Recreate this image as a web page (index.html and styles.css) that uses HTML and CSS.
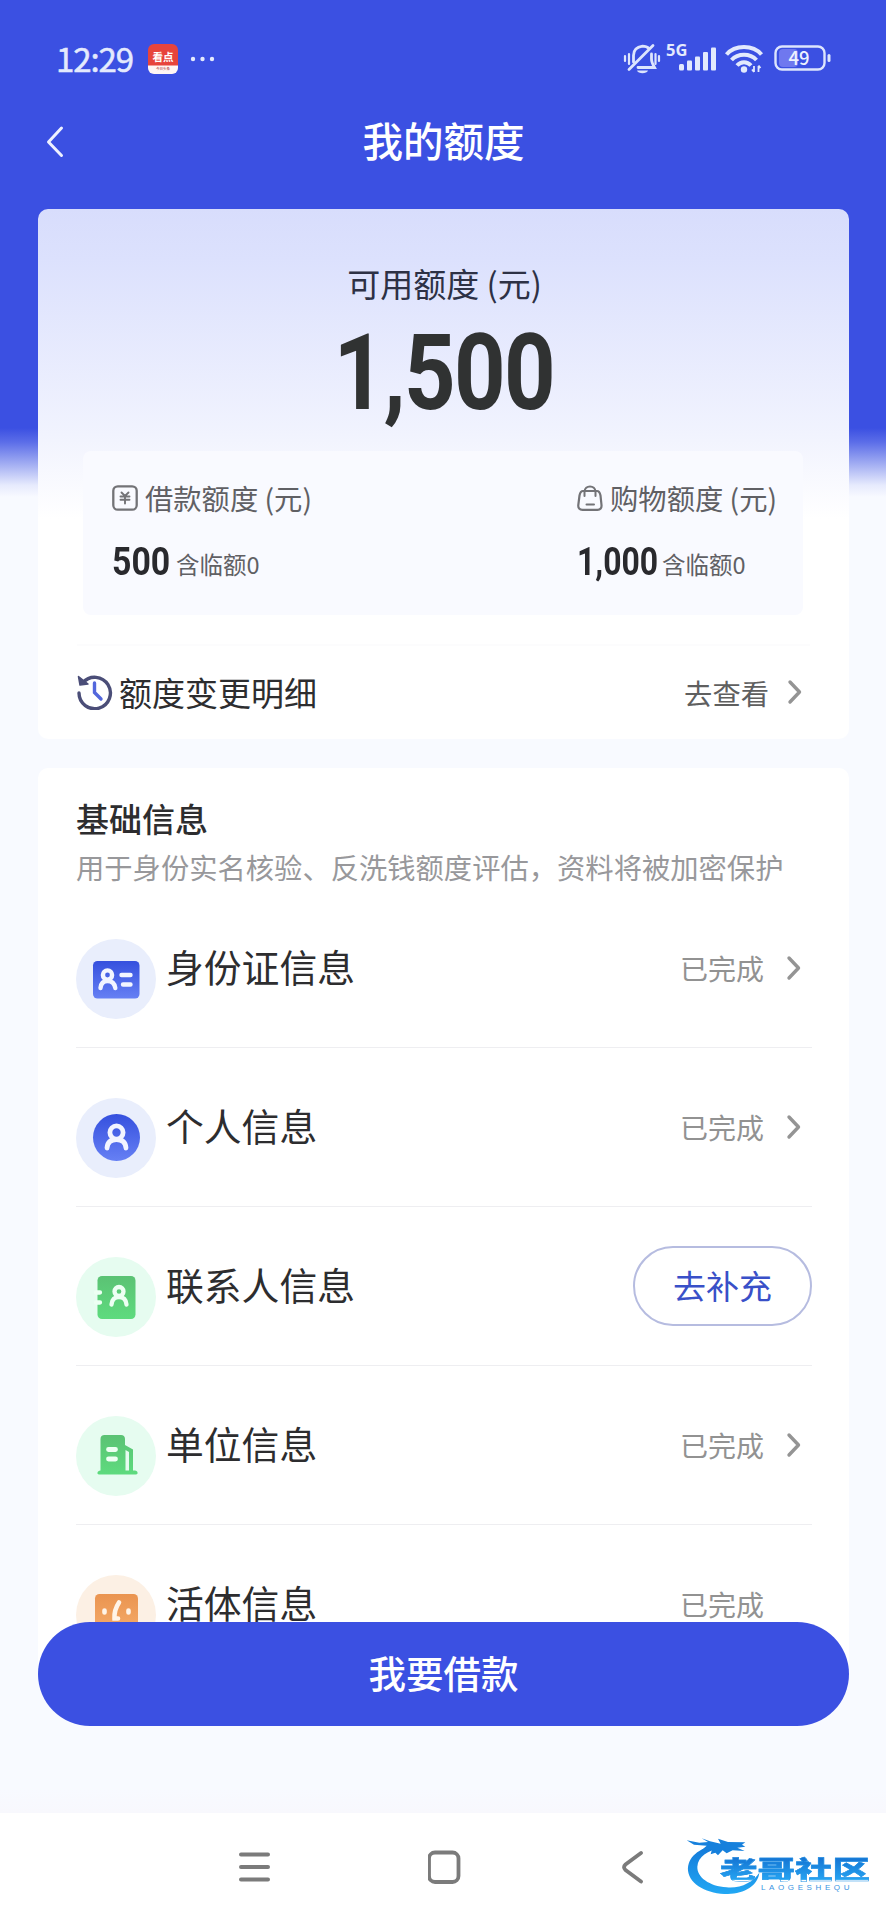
FILE: index.html
```html
<!DOCTYPE html>
<html lang="zh-CN">
<head>
<meta charset="utf-8">
<title>我的额度</title>
<link rel="stylesheet" href="styles.css">
</head>
<body>
<svg class="defs" width="0" height="0">
  <defs>
    <linearGradient id="blue" x1="0" y1="0" x2="0" y2="1"><stop offset="0" stop-color="#3550de"/><stop offset="1" stop-color="#6680f4"/></linearGradient>
    <linearGradient id="green" x1="0" y1="0" x2="0" y2="1"><stop offset="0" stop-color="#5bc274"/><stop offset="1" stop-color="#5edb7e"/></linearGradient>
    <linearGradient id="orange" x1="0" y1="0" x2="0" y2="1"><stop offset="0" stop-color="#ea9450"/><stop offset="1" stop-color="#f6ae6c"/></linearGradient>
    <linearGradient id="brand" x1="0" y1="0" x2="0" y2="1"><stop offset="0" stop-color="#1478d8"/><stop offset="1" stop-color="#22a8f4"/></linearGradient>
    <symbol id="chevron" viewBox="0 0 16 26"><path d="M3 3 L12.500 13 L3 23" fill="none" stroke="#949494" stroke-width="3.400" stroke-linecap="round" stroke-linejoin="round"/></symbol>
  </defs>
</svg>
<div class="screen">
  <header class="status">
    <span class="clock">12:29</span>
    <span class="app"><span class="app-name">看点</span><span class="app-sub">今日头条</span></span>
    <svg class="dots" width="26" height="6" viewBox="0 0 26 6"><g fill="#e4eafd"><circle cx="3" cy="3" r="2.200"/><circle cx="12.500" cy="3" r="2.200"/><circle cx="22" cy="3" r="2.200"/></g></svg>
    <svg class="tray" width="212" height="34" viewBox="0 0 212 34">
      <g fill="none" stroke="#dde5fd" stroke-width="2.800" stroke-linecap="round">
        <path d="M2 14v5M6 12v10M32.500 12v10M36 14v5" stroke-width="2.200"/>
        <path d="M10.500 20V13.500C10.500 8 14 5 19.500 4.200C22.500 4.200 24.500 5 26 6.500M28.500 12v5c0 3 1 5 3 8.500H15"/>
        <path d="M30 3.500 L6 27.500"/>
      </g>
      <path d="M14 28.500h11c-1 3.500-10 3.500-11 0z" fill="#dde5fd"/>
      <g fill="#e2e9fd"><rect x="56" y="22" width="5" height="6.500" rx="1.500"/><rect x="64" y="18.500" width="5" height="10" rx="1"/><rect x="72" y="14.500" width="5" height="14" rx="1"/><rect x="80" y="10" width="5" height="18.500" rx="1"/><rect x="88" y="5.500" width="5" height="23" rx="1"/></g>
      <g fill="none" stroke="#e2e9fd" stroke-width="4">
        <path d="M103.500 12.500C112 2.500 130 2.500 138.500 12.500"/><path d="M108.500 18C115 11 127 11 133.500 18"/><path d="M114 23.500C118 19 124 19 128 23.500"/>
      </g>
      <circle cx="121" cy="27.500" r="3.200" fill="#e2e9fd"/>
      <path d="M131 24v6M135.500 24v6M129 27.500l2 2.500M137.500 26l-2-2.500" stroke="#e2e9fd" stroke-width="1.800" fill="none"/>
      <rect x="156" y="7" width="19" height="18" rx="4" fill="#6f78ef"/>
      <rect x="152.500" y="4.500" width="49" height="23" rx="6.500" fill="none" stroke="#dde5fd" stroke-width="2.400"/>
      <rect x="204.500" y="12" width="3" height="8" rx="1.500" fill="#dde5fd"/>
      <text x="43" y="14" class="net">5G</text>
      <text x="165.500" y="22.500" class="batt">49</text>
    </svg>
  </header>

  <div class="titlebar">
    <svg class="back" width="20" height="34" viewBox="0 0 20 34"><path d="M16.500 3 L3.500 17 L16.500 30.500" fill="none" stroke="#eef1ff" stroke-width="3" stroke-linecap="round" stroke-linejoin="round"/></svg>
    <h1>我的额度</h1>
  </div>

  <main>
    <section class="card quota">
      <p class="quota-label">可用额度 (元)</p>
      <p class="quota-total"><span>1,500</span></p>
      <div class="split">
        <div class="part">
          <div class="part-head">
            <svg width="26" height="26" viewBox="0 0 26 26" fill="none" stroke="#737377" stroke-linecap="round"><rect x="1.300" y="1.300" width="23.400" height="23.400" rx="4.500" stroke-width="2.300"/><path d="M9.500 7.500L13 11L16.500 7.500M8.500 11.500H17.500M8.500 14.700H17.500M13 11V18.500" stroke-width="1.900"/></svg>
            <span>借款额度 (元)</span>
          </div>
          <div class="part-val"><span class="num n3"><span>500</span></span><span class="temp">含临额0</span></div>
        </div>
        <div class="part">
          <div class="part-head">
            <svg width="26" height="26" viewBox="0 0 26 26" fill="none" stroke="#737377" stroke-width="2.200" stroke-linecap="round"><path d="M6 6H20C22 6 23 8 23.500 10.500L24.500 20C24.800 23 23.300 24.800 20.500 24.800H5.500C2.500 24.800 1 23 1.300 20L2.500 10.500C3 8 4 6 6 6Z"/><path d="M7.500 11V7C7.500 -.5 18.500 -.5 18.500 7V11M9.500 19.500H17" stroke-width="2"/></svg>
            <span>购物额度 (元)</span>
          </div>
          <div class="part-val"><span class="num n4"><span>1,000</span></span><span class="temp">含临额0</span></div>
        </div>
      </div>
      <div class="history">
        <svg width="36" height="36" viewBox="0 0 36 36" fill="none"><path d="M6 8.500A15.700 15.700 0 1 1 2 19" stroke="#4b4e78" stroke-width="3.400" stroke-linecap="round"/><path d="M1.500 2.500L3 11L11 10Z" fill="#4b4e78" stroke="#4b4e78" stroke-width="1.500" stroke-linejoin="round"/><path d="M17.500 9V18.500L24 25" stroke="#5367dc" stroke-width="3.400" stroke-linecap="round"/></svg>
        <span class="history-name">额度变更明细</span>
        <span class="go">去查看</span>
        <svg class="chev" width="16" height="26"><use href="#chevron"/></svg>
      </div>
    </section>

    <section class="card info">
      <h2>基础信息</h2>
      <p class="desc">用于身份实名核验、反洗钱额度评估，资料将被加密保护</p>
      <ul>
        <li>
          <svg class="ico" viewBox="0 0 80 80"><circle cx="40" cy="40" r="40" fill="#e9eefc"/><rect x="17" y="22" width="46.500" height="37.500" rx="4.500" fill="url(#blue)"/><g fill="none" stroke="#f2f5ff" stroke-width="4.400" stroke-linecap="round"><circle cx="31.500" cy="36" r="4.600"/><path d="M24.500 49C25 44 28 42 31.500 42S38.500 44 39.300 49M45.500 36H54.500M47 45.500H54.500"/></g></svg>
          <span class="name">身份证信息</span><span class="done">已完成</span><svg class="chev" width="16" height="26"><use href="#chevron"/></svg>
        </li>
        <li>
          <svg class="ico" viewBox="0 0 80 80"><circle cx="40" cy="40" r="40" fill="#e9eefc"/><circle cx="40.500" cy="39.500" r="23.500" fill="url(#blue)"/><g fill="none" stroke="#f2f5ff" stroke-width="4.800" stroke-linecap="round"><circle cx="40.500" cy="34.500" r="6.600"/><path d="M31 50C31.500 44 35.500 41.500 40.500 41.500S49.500 44 50 50"/></g></svg>
          <span class="name">个人信息</span><span class="done">已完成</span><svg class="chev" width="16" height="26"><use href="#chevron"/></svg>
        </li>
        <li>
          <svg class="ico" viewBox="0 0 80 80"><circle cx="40" cy="40" r="40" fill="#e6fcf0"/><rect x="21.500" y="19" width="38" height="43" rx="4.500" fill="url(#green)"/><g fill="none" stroke="#edfff3" stroke-width="4.300" stroke-linecap="round"><circle cx="43" cy="34.500" r="4.500"/><path d="M35.500 47.500C36 42.500 39 40.200 43 40.200S50 42.500 50.500 47.500M20 35.500H24M20 45.500H24"/></g></svg>
          <span class="name">联系人信息</span><button class="fill">去补充</button>
        </li>
        <li>
          <svg class="ico" viewBox="0 0 80 80"><circle cx="40" cy="40" r="40" fill="#e6fcf0"/><path d="M24.500 23C24.500 20.500 26 19 28.500 19H45C47.500 19 49 20.500 49 23V29L57 33.500V54.500H59C62 54.500 62.500 58.500 60 58.500H23C20.500 58.500 21 54.500 24.500 54.500Z" fill="url(#green)"/><path d="M49.500 34L53 36V54.500H49.500Z" fill="#e6fcf0"/><path d="M32.500 33.500H39.500M32.500 43H39.500" stroke="#edfff3" stroke-width="4.800" stroke-linecap="round"/></svg>
          <span class="name">单位信息</span><span class="done">已完成</span><svg class="chev" width="16" height="26"><use href="#chevron"/></svg>
        </li>
        <li>
          <svg class="ico" viewBox="0 0 80 80"><circle cx="40" cy="40" r="40" fill="#fcf0e4"/><rect x="19" y="19" width="43" height="43" rx="4.500" fill="url(#orange)"/><g stroke="#fff4e8" stroke-width="4.600" stroke-linecap="round" fill="none"><path d="M28.500 35.500V37.500M52.500 35.500V37.500M43 27.500Q38 35 38.500 43.500H42"/></g></svg>
          <span class="name">活体信息</span><span class="done last">已完成</span>
        </li>
      </ul>
    </section>
  </main>

  <button class="borrow">我要借款</button>

  <nav class="nav">
    <svg width="32" height="34" viewBox="0 0 32 34"><path d="M3 4.500H30M3 17H30M3 29.500H30" stroke="#7b7b7b" stroke-width="4" stroke-linecap="round"/></svg>
    <svg width="34" height="34" viewBox="0 0 34 34"><rect x="1" y="2.500" width="29.500" height="29.500" rx="6" fill="none" stroke="#7b7b7b" stroke-width="3.800"/></svg>
    <svg width="24" height="34" viewBox="0 0 24 34"><path d="M21 3L5.500 14.500Q2.500 17.300 5.500 20L21 31.500" fill="none" stroke="#7b7b7b" stroke-width="3.800" stroke-linecap="round"/></svg>
  </nav>
  <div class="mark">
    <svg width="190" height="67" viewBox="190 90 570 201">
      <path d="M285 134C235 145 200 170 202 212C207 255 262 282 322 282C372 280 412 256 416 218C398 246 360 266 318 262C266 258 229 232 230 200C232 170 262 150 296 148Z" fill="url(#brand)"/>
      <path d="M198 121L236 128L262 126L243 115L268 124L300 131L292 116L322 126L374 127L364 134L374 140L350 143L372 153L336 151L318 160L306 151L292 166L284 158L270 163L274 148L240 153L258 137L220 134Z" fill="#1680dc"/>
    </svg>
    <span class="mark-name">老哥社区</span>
    <span class="mark-sub">LAOGESHEQU</span>
  </div>
</div>
</body>
</html>
```
FILE: styles.css
```css
* { box-sizing: border-box; margin: 0; padding: 0; }
body {
  font-family: "Noto Sans CJK SC", sans-serif;
  color: #2d2d2f;
}
svg { display: block; flex: none; }
.defs { position: absolute; }
.screen {
  position: relative;
  width: 886px;
  height: 1920px;
  overflow: hidden;
  background: linear-gradient(#3b50e2 0, #3b50e2 428px, #5b6de8 442px, #a5b0f3 465px, #e6eafd 485px, #f8faff 497px, #f8faff 1790px, #f8f8fd 1813px);
}

.status {
  display: flex;
  align-items: center;
  height: 80px;
  padding: 38px 0 0 56px;
}
.clock {
  width: 92px;
  padding-bottom: 3px;
  font: 400 33px/42px "Noto Sans CJK SC", sans-serif;
  letter-spacing: -1.100px;
  -webkit-text-stroke: .5px #e4eafd;
  color: #e4eafd;
  white-space: nowrap;
}
.app {
  display: flex;
  flex-direction: column;
  align-items: center;
  width: 30px;
  height: 30px;
  border-radius: 6px;
  overflow: hidden;
  background: linear-gradient(#e7443c 0 21px, #fff6f4 22px);
}
.app-name { font-size: 10.500px; line-height: 15px; padding-top: 5px; font-weight: 700; color: #fff; }
.app-sub { font-size: 3.500px; line-height: 8px; color: #a33; padding-top: 1px; }
.dots { margin-left: 12px; }
.tray { margin-left: 406.500px; }
.net { font: 700 16.500px "Open Sans", sans-serif; fill: #e4eafd; }
.batt { font: 500 18.500px "Noto Sans CJK SC", sans-serif; fill: #eef2ff; }

.titlebar {
  display: flex;
  align-items: center;
  height: 129px;
  padding: 0 0 5px 45px;
}
.back { width: 20px; }
h1 {
  flex: 1;
  padding: 0 64px 4px 0;
  text-align: center;
  font-size: 40.500px;
  font-weight: 500;
  line-height: 56px;
  color: #fff;
}

main { padding: 0 37px 0 38px; }
.card { border-radius: 10px; background: #fff; }
.quota {
  height: 530px;
  background: linear-gradient(#d8ddfc 0, #dce1fd 50px, #f1f3fe 225px, #fff 310px);
}
.quota-label {
  padding: 49px 0 1px 2px;
  font-size: 33px;
  line-height: 50px;
  text-align: center;
  color: #2d3145;
}
.quota-total {
  display: flex;
  justify-content: center;
  height: 142px;
  font: 700 106px/128px Roboto, sans-serif;
  color: #303232;
}
.quota-total span { transform: scaleX(.85); letter-spacing: -2px; }
.split {
  display: flex;
  justify-content: space-between;
  height: 164px;
  margin: 0 46px 0 45px;
  padding: 24px 26px 0 29px;
  border-radius: 8px;
  background: #f9faff;
}
.part { color: #606064; }
.part-head { display: flex; align-items: center; gap: 6px; height: 46px; font-size: 28.300px; white-space: nowrap; }
.part-head span { padding: 0 0 2px 1px; }
.part-val { display: flex; align-items: center; height: 46px; margin-top: 16px; }
.num { font: 700 38px/46px Roboto, sans-serif; color: #29292d; }
.num span { display: inline-block; padding-top: 3px; transform: scaleX(.89); transform-origin: 0 50%; }
.n3 { width: 64px; }
.n4 { width: 85px; }
.n4 span { transform: scaleX(.84); }
.temp { font-size: 23.500px; line-height: 30px; padding-top: 7px; }
.history {
  display: flex;
  align-items: center;
  height: 94px;
  margin: 29px 39px 0;
  border-top: 2px solid #fcfcfd;
}
.history-name { flex: 1; padding-left: 6px; font-size: 33px; }
.go { font-size: 28.300px; color: #5f5f5f; }
.chev { margin: 0 7px 0 18px; }

.info { height: 904px; margin-top: 29px; padding: 0 37px 0 38px; }
h2 { padding-top: 25px; font-size: 33px; line-height: 50px; font-weight: 500; }
.desc { height: 46px; font-size: 28.300px; line-height: 48px; color: #98989b; white-space: nowrap; }
ul { list-style: none; }
li {
  display: flex;
  align-items: center;
  height: 159px;
  border-bottom: 1px solid #eeeef1;
}
.ico { width: 80px; height: 80px; margin-top: 22px; }
.name { flex: 1; padding: 0 0 4px 10px; font-size: 37.800px; line-height: 56px; }
.done { font-size: 28px; color: #929292; }
.done.last { margin-right: 48px; }
li .chev { margin: 0 10px 0 22px; }
.fill {
  width: 179px;
  height: 80px;
  padding-bottom: 3px;
  border: 2px solid #b6bce0;
  border-radius: 40px;
  background: #fff;
  font: 400 33px/48px "Noto Sans CJK SC", sans-serif;
  color: #3950c8;
}

.borrow {
  position: absolute;
  left: 38px;
  top: 1622px;
  width: 811px;
  height: 104px;
  padding-bottom: 4px;
  border: 0;
  border-radius: 52px;
  background: #3b50e2;
  font: 500 37.500px/56px "Noto Sans CJK SC", sans-serif;
  color: #fff;
}
.nav {
  position: absolute;
  left: 0;
  bottom: 0;
  display: flex;
  align-items: flex-start;
  justify-content: space-between;
  width: 100%;
  height: 107px;
  padding: 37px 242px 0 238px;
  background: #fff;
}
.mark { position: absolute; left: 684px; top: 1830px; width: 190px; height: 67px; }
.mark-name {
  position: absolute;
  left: 36px;
  top: 20px;
  font-size: 37.500px;
  line-height: 36px;
  font-weight: 900;
  white-space: nowrap;
  transform: scaleY(.66);
  background: linear-gradient(#1470d0, #25a4f2);
  -webkit-background-clip: text;
  background-clip: text;
  color: transparent;
  -webkit-text-stroke: .6px #2090e4;
}
.mark-sub {
  position: absolute;
  left: 77px;
  top: 53px;
  font: 400 8px/9px "Liberation Sans", sans-serif;
  letter-spacing: 3.600px;
  color: #3a94e2;
}
```
